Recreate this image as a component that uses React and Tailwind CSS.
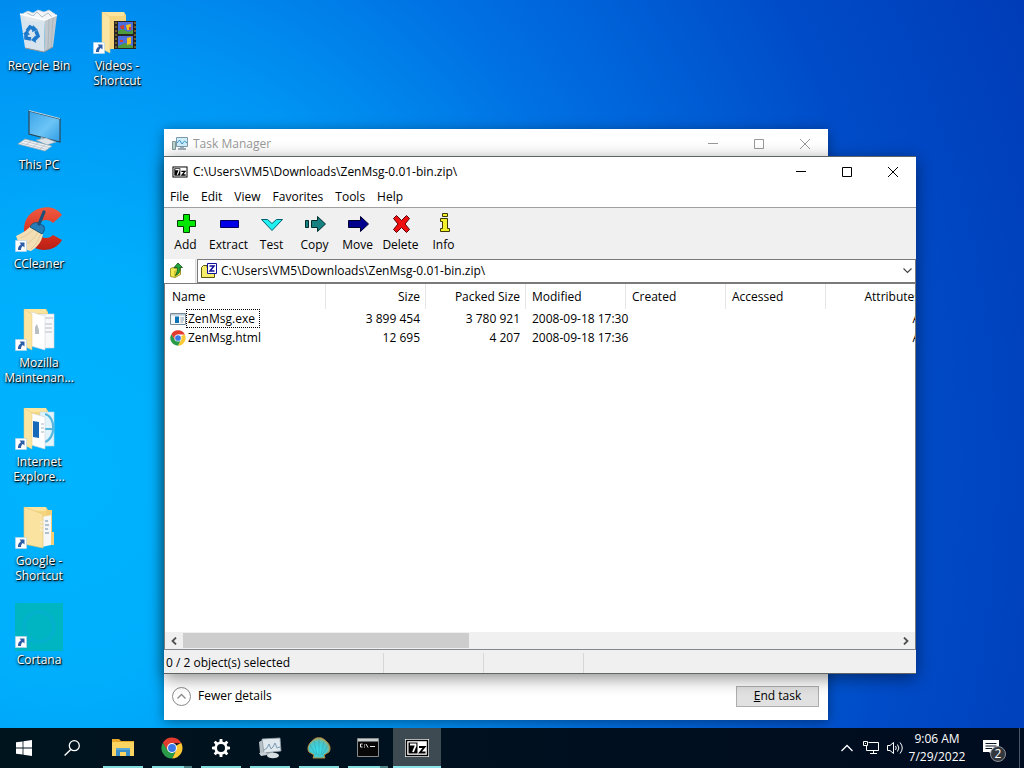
import React from "react";

const desktopColumns = [
  [
    { label: "Recycle Bin", Icon: RecycleBinIcon },
    { label: "This PC", Icon: ComputerIcon },
    { label: "CCleaner", Icon: CCleanerIcon, shortcut: true },
    { label: "Mozilla Maintenan...", Icon: MozillaFolderIcon, shortcut: true },
    { label: "Internet Explore...", Icon: ExplorerFolderIcon, shortcut: true },
    { label: "Google - Shortcut", Icon: GoogleFolderIcon, shortcut: true },
    { label: "Cortana", Icon: CortanaIcon, shortcut: true },
  ],
  [{ label: "Videos - Shortcut", Icon: VideosFolderIcon, shortcut: true }],
];

const menus = ["File", "Edit", "View", "Favorites", "Tools", "Help"];

const tools = [
  { label: "Add", Icon: AddIcon },
  { label: "Extract", Icon: ExtractIcon },
  { label: "Test", Icon: TestIcon },
  { label: "Copy", Icon: CopyIcon },
  { label: "Move", Icon: MoveIcon },
  { label: "Delete", Icon: DeleteIcon },
  { label: "Info", Icon: InfoIcon },
];

const files = [
  { name: "ZenMsg.exe", size: "3 899 454", packed: "3 780 921", modified: "2008-09-18 17:30", Icon: ExeIcon, focused: true },
  { name: "ZenMsg.html", size: "12 695", packed: "4 207", modified: "2008-09-18 17:36", Icon: ChromeIcon },
];

const apps = [
  { name: "File Explorer", Icon: FileExplorerIcon },
  { name: "Google Chrome", Icon: ChromeIcon, stacked: true },
  { name: "Settings", Icon: GearIcon },
  { name: "Task Manager", Icon: TaskManagerBigIcon },
  { name: "Classic Shell", Icon: ShellIcon },
  { name: "Command Prompt", Icon: TerminalIcon, stacked: true },
  { name: "7-Zip", Icon: SevenZipIcon, active: true },
];

/* ---------- desktop icons ---------- */

function RecycleBinIcon() {
  return (
    <svg viewBox="0 0 48 48" className="size-12">
      <path d="M7 5 13 2 18 4 23 1 29 3 34 1 40 5 42 7 36 12H12Z" fill="#f3f6f8" stroke="#c5ced6" strokeWidth=".7" />
      <path d="M12 4 18 7 22 3 27 8 33 4 37 8" fill="none" stroke="#aab7c2" strokeWidth=".9" />
      <path d="M5 5 30 11 29 43 10 39Z" fill="#e3e8ec" opacity=".95" />
      <path d="M30 11 42 6 38 38 29 43Z" fill="#c0c8ce" />
      <path d="M34 10 33 40M38 8 36 39" stroke="#aab3ba" strokeWidth=".8" />
      <path d="M5 5 30 11 42 6" fill="none" stroke="#fff" strokeWidth="1.3" />
      <path d="M10 39 29 43 38 38" fill="none" stroke="#8c959c" strokeWidth="1" />
      <g fill="none" stroke="#1b78cb" strokeWidth="3.6">
        <path d="M12 22 15 18 19 20" />
        <path d="M21 22 23 27 19 31" />
        <path d="M16 30 11 29 11 24" />
      </g>
      <path d="M18 16 23 21 17 23ZM20 27 16 31 21 34ZM8 25 12 21 15 26Z" fill="#1b78cb" />
    </svg>
  );
}

function ComputerIcon() {
  return (
    <svg viewBox="0 0 48 48" className="size-12">
      <defs>
        <linearGradient id="screen" x1="0" y1="0" x2="1" y2="1">
          <stop offset="0" stopColor="#3ba4e8" />
          <stop offset=".55" stopColor="#6cc4f6" />
          <stop offset="1" stopColor="#2f9be4" />
        </linearGradient>
      </defs>
      <path d="M14 3 45 11V34L14 26Z" fill="url(#screen)" stroke="#2d4658" strokeWidth="1.2" />
      <path d="M14 2.500 45 10.500" stroke="#dff0fa" strokeWidth=".8" />
      <path d="M26 29 33 31 32 33 25 32Z" fill="#b9c4cc" />
      <path d="M21 32 31 30 41 34 32 37Z" fill="#dde3e8" stroke="#93a3ae" strokeWidth=".6" />
      <path d="M3 36 10 31 37 38 30 43Z" fill="#eef1f4" stroke="#9aa7b0" strokeWidth=".7" />
      <path d="M6 35 32 41.500M9 33 34 39.500M11 37 16 33M18 39 23 35M25 41 30 37" stroke="#b2bcc4" strokeWidth=".7" />
    </svg>
  );
}

function CCleanerIcon() {
  return (
    <svg viewBox="0 0 48 48" className="size-12">
      <defs>
        <linearGradient id="cc" x1="0" y1="0" x2="0" y2="1">
          <stop offset="0" stopColor="#ef5b42" />
          <stop offset=".6" stopColor="#d8321f" />
          <stop offset="1" stopColor="#b91f14" />
        </linearGradient>
      </defs>
      <path d="M47 8C42 1 34-1 26 1 15 4 9 12 9 23S16 42 28 43c8 0 15-3 19-10L38 28c-2 2-4 3-7 3-5 0-9-4-9-9s4-9 9-9c3 0 5 1 7 3Z" fill="url(#cc)" />
      <path d="M1 29C8 26 13 22 17 18L28 25C28 33 23 40 16 44 9 43 4 38 1 29Z" fill="#f3dfb6" />
      <path d="M5 31C11 29 15 26 19 22M10 38C17 34 20 30 23 25M16 42C21 38 23 33 26 27" fill="none" stroke="#dcc08e" strokeWidth=".7" />
      <path d="M15 20C17 16 20 15 23 16L29 19C30 22 29 25 27 27Z" fill="#257eb8" stroke="#15567f" />
      <path d="M24 17 29 5" stroke="#1b4f79" strokeWidth="3.200" strokeLinecap="round" />
    </svg>
  );
}

function FolderBack() {
  return (
    <>
      <path d="M9 3H31L33 6V40H9Z" fill="#f5d67f" />
      <path d="M9 3H31V7H9Z" fill="#fbe49e" />
    </>
  );
}

function FolderFlap() {
  return <path d="M9 3 17 8V44L9 40Z" fill="#fbe5a2" stroke="#e8c874" strokeWidth=".5" />;
}

function MozillaFolderIcon() {
  return (
    <svg viewBox="0 0 48 48" className="size-12">
      <FolderBack />
      <path d="M25 8H39V42H25Z" fill="#f7f8fa" stroke="#d3d9df" strokeWidth=".6" />
      <path d="M29 12H38M30 18H37M30 22H37M30 26H37" stroke="#b7bdc6" strokeWidth="1" />
      <path d="M16 6 30 10V44L16 40Z" fill="#fff" stroke="#d3d9df" strokeWidth=".6" />
      <path d="M20 21 22 18 24 24V28H20Z" fill="#b9bec4" />
      <FolderFlap />
    </svg>
  );
}

function ExplorerFolderIcon() {
  return (
    <svg viewBox="0 0 48 48" className="size-12">
      <FolderBack />
      <path d="M25 7H39V41H25Z" fill="#e2f4fb" stroke="#b7d8e8" strokeWidth=".6" />
      <path d="M30 9C41 12 41 33 30 37M30 24H39" fill="none" stroke="#55b7df" strokeWidth="2.200" />
      <path d="M16 8 30 12V44L16 40Z" fill="#fff" stroke="#cdd5dc" strokeWidth=".6" />
      <path d="M18 16 24 17V33L18 32Z" fill="#1668b8" />
      <path d="M26 19H29M26 23H29M26 27H29" stroke="#a6b5c2" />
      <FolderFlap />
    </svg>
  );
}

function GoogleFolderIcon() {
  return (
    <svg viewBox="0 0 48 48" className="size-12">
      <FolderBack />
      <path d="M31 6H37V28H39V41H31Z" fill="#f2cf76" />
      <path d="M27 13 36 11V41L27 43Z" fill="#f4f6f8" />
      <path d="M30 17H33M30 21H34M30 25H33M30 29H34" stroke="#6a8aa6" strokeWidth="1.200" />
      <path d="M9 3 28 10V44L9 40Z" fill="#fae2a0" stroke="#e6c573" strokeWidth=".6" />
      <path d="M25 18H28M25 22H28M25 26H28" stroke="#f4ead0" strokeWidth="1.500" />
    </svg>
  );
}

function CortanaIcon() {
  return (
    <svg viewBox="0 0 48 48" className="size-12">
      <path d="M0 0H48V48H0Z" fill="#00b5c2" />
      <circle cx="24" cy="24" r="15" fill="none" stroke="#04b1cc" strokeWidth="4" />
    </svg>
  );
}

function VideosFolderIcon() {
  return (
    <svg viewBox="0 0 48 48" className="size-12">
      <FolderBack />
      <FolderFlap />
      <path d="M21 12H43V40H21Z" fill="#242424" />
      <path d="M25 13H40V25H25ZM25 27H40V39H25Z" fill="#4b6dde" />
      <path d="M25 22 30 20 35 23 40 21V25H25ZM25 37 32 34 40 37V39H25Z" fill="#4e9a3c" />
      <path d="M33 16 38 15 37 21H34ZM34 29 38 28V35L34 36Z" fill="#f1c01d" />
      <path d="M27 17 31 16V20H28ZM36 18H38V21H36ZM27 31H30V33H27Z" fill="#d0402c" />
      <path d="M23 13V39M42 13V39" stroke="#a58436" strokeWidth="1.200" strokeDasharray="2 2" />
    </svg>
  );
}

function ShortcutBadge() {
  return (
    <svg viewBox="0 0 12 12" className="absolute bottom-[3px] left-0 size-3">
      <path d="M.5.5H11.500V11.500H.5Z" fill="#fff" stroke="#b9d5e8" strokeWidth=".7" />
      <path d="M4.500 2.500H9.500V7.500L7.800 6C6.500 7 6 8.200 6 10H3C2.800 7.400 3.800 5.600 6 4.200Z" fill="#2c5ea8" />
    </svg>
  );
}

/* ---------- file manager icons ---------- */

function SevenZipIcon({ className = "h-3 w-4" }) {
  return (
    <svg viewBox="0 0 24 18" className={className}>
      <path d="M0 0H24V18H0Z" fill="#fff" />
      <path d="M.7 .7H23.300V17.300H.7Z" fill="#000" />
      <path d="M2.200 2.200H21.800V15.800H2.200Z" fill="#fff" />
      <path d="M3.500 3.500H12.500V14.500H3.500Z" fill="#000" />
      <path d="M5 5.500H10.500V7L8 13" fill="none" stroke="#fff" strokeWidth="1.800" />
      <path d="M14 8H19.500L15 13.500H20.500" fill="none" stroke="#000" strokeWidth="1.900" />
    </svg>
  );
}

function AddIcon() {
  return (
    <svg viewBox="0 0 24 24" className="size-6">
      <path d="M9.500 2.500H15.500V8.500H21.500V14.500H15.500V20.500H9.500V14.500H3.500V8.500H9.500Z" fill="#00e800" stroke="#003c00" />
    </svg>
  );
}

function ExtractIcon() {
  return (
    <svg viewBox="0 0 24 24" className="size-6">
      <path d="M3.500 8.500H21.500V15.500H3.500Z" fill="#0000e8" stroke="#00005a" />
    </svg>
  );
}

function TestIcon() {
  return (
    <svg viewBox="0 0 24 24" className="size-6">
      <path d="M1.500 7.500H7.500L12 11.500 16.500 7.500H22.500L12 18.500Z" fill="#20f0f0" stroke="#006070" />
    </svg>
  );
}

function CopyIcon() {
  return (
    <svg viewBox="0 0 24 24" className="size-6">
      <path d="M2.500 8.500H5.500V15.500H2.500ZM8.500 8.500H14.500V4.500L22.500 12 14.500 19.500V15.500H8.500Z" fill="#178080" stroke="#002c2c" />
    </svg>
  );
}

function MoveIcon() {
  return (
    <svg viewBox="0 0 24 24" className="size-6">
      <path d="M2.500 8.500H14.500V4.500L22.500 12 14.500 19.500V15.500H2.500Z" fill="#00008c" stroke="#000030" />
    </svg>
  );
}

function DeleteIcon() {
  return (
    <svg viewBox="0 0 24 24" className="size-6">
      <path d="M4.500 6.500 7.500 3.500 12.500 8.500 17.500 3.500 20.500 6.500 16 12 20.500 17.500 17.500 20.500 12.500 15.500 7.500 20.500 4.500 17.500 9 12Z" fill="#f01010" stroke="#5a0000" />
    </svg>
  );
}

function InfoIcon() {
  return (
    <svg viewBox="0 0 24 24" className="size-6">
      <path d="M10.500 1.500H15.500V4.500H10.500ZM8.500 6.500H15.500V16.500H17.500V19.500H8.500V16.500H10.500V9.500H8.500Z" fill="#f4f02c" stroke="#3c3a00" />
    </svg>
  );
}

function FolderUpIcon() {
  return (
    <svg viewBox="0 0 16 16" className="size-4">
      <path d="M2.500 5.500 5 4.500 7 5.500 12.500 4.500V11.500L7 14.500 2.500 13.500Z" fill="#f4ea50" stroke="#8c8410" strokeWidth=".8" />
      <path d="M7 7.500V14.500" stroke="#a8a018" />
      <path d="M10 0 14.500 4.500H12C12.500 8.500 11 11 7.500 12.500 9 10 9.500 7.500 9.300 4.500H6Z" fill="#22a83a" stroke="#0c4c18" strokeWidth=".8" />
    </svg>
  );
}

function ArchiveIcon() {
  return (
    <svg viewBox="0 0 16 16" className="size-4 shrink-0">
      <path d="M.5 4.500 2.500 2.500H6V4.500H13.500V14.500H.5Z" fill="#f6ee6a" stroke="#5c5808" />
      <path d="M6.500.5H15.500V10.500H6.500Z" fill="#fff" stroke="#10109a" />
      <path d="M8.500 3H13L9 8H13.500" fill="none" stroke="#10109a" strokeWidth="1.500" />
    </svg>
  );
}

function ExeIcon() {
  return (
    <svg viewBox="0 0 16 16" className="size-4">
      <path d="M.5 2.500H15.500V13.500H.5Z" fill="#f5f8fa" stroke="#7a8b98" />
      <path d="M1 3H15V4.500H1Z" fill="#b8c9d6" />
      <path d="M5 5.500H9V12H5Z" fill="#0d74b8" />
      <path d="M10.500 7H14M10.500 9H14M10.500 11H13" stroke="#93a3ae" />
    </svg>
  );
}

function ChromeIcon({ className = "size-4" }) {
  return (
    <svg viewBox="0 0 24 24" className={className}>
      <path d="M12 12 22 6.300A11.500 11.500 0 0 1 12 23.500L16.500 14.500Z" fill="#fcc934" />
      <path d="M12 12 16.400 14.600 12 23.500A11.500 11.500 0 0 1 2.040 6.250L7.700 14.500Z" fill="#2a9b49" />
      <path d="M12 6.700H22.200A11.500 11.500 0 0 0 2.040 6.250L7.400 14.600Z" fill="#e33b2e" />
      <circle cx="12" cy="12" r="5.400" fill="#fff" />
      <circle cx="12" cy="12" r="4.300" fill="#3b78e7" />
    </svg>
  );
}

function MonitorIcon() {
  return (
    <svg viewBox="0 0 16 16" className="size-4">
      <path d="M.5 5.500H3.500V13.500H.5Z" fill="#bcd3d0" stroke="#7f9a98" />
      <path d="M4.500 1.500H15.500V10.500H4.500Z" fill="#cfeefb" stroke="#7d99ab" />
      <path d="M5 7 7.500 4 10 8 12.500 5 15 7" fill="none" stroke="#3c93c8" />
      <path d="M8 11H12V12H14V14H6V12H8Z" fill="#9fb0bb" />
    </svg>
  );
}

/* ---------- taskbar icons ---------- */

function WindowsLogo() {
  return (
    <svg viewBox="0 0 16 16" className="size-4">
      <path d="M0 2.300 6.600 1.400V7.600H0ZM7.400 1.300 16 0V7.600H7.400ZM0 8.400H6.600V14.600L0 13.700ZM7.400 8.400H16V16L7.400 14.700Z" fill="#fff" />
    </svg>
  );
}

function SearchIcon() {
  return (
    <svg viewBox="0 0 16 16" className="size-4">
      <circle cx="10.300" cy="5.700" r="5" fill="none" stroke="#fff" strokeWidth="1.300" />
      <path d="M6.800 9.500.6 15.500" stroke="#fff" strokeWidth="1.400" />
    </svg>
  );
}

function FileExplorerIcon() {
  return (
    <svg viewBox="0 0 24 20" className="h-5 w-6">
      <path d="M1 1H8L10 3H23V18H1Z" fill="#e8a82c" />
      <path d="M1 4H23V18H1Z" fill="#fcd462" />
      <path d="M5 10H19V18H15V14H9V18H5Z" fill="#3a8fc8" />
      <path d="M5 10H19V12H5Z" fill="#5aa8d6" />
    </svg>
  );
}

function GearIcon() {
  const teeth = [0, 45, 90, 135, 180, 225, 270, 315];
  return (
    <svg viewBox="0 0 20 20" className="size-5">
      {teeth.map((angle) => (
        <path key={angle} d="M8.300 4.500 8.700 1H11.300L11.700 4.500Z" fill="#fff" transform={`rotate(${angle} 10 10)`} />
      ))}
      <circle cx="10" cy="10" r="5.300" fill="none" stroke="#fff" strokeWidth="2.600" />
    </svg>
  );
}

function TaskManagerBigIcon() {
  return (
    <svg viewBox="0 0 24 24" className="size-6">
      <path d="M1 6 6 3V18L2 17Z" fill="#b4bec4" />
      <path d="M4 3 22 2 23 15 6 17Z" fill="#dfe8ed" stroke="#8e9ba3" strokeWidth=".8" />
      <path d="M6 14 9 12 11 8 13 13 15 11 17 7 19 12 22 11" fill="none" stroke="#6d93b0" strokeWidth=".9" />
      <path d="M7 17 15 16 16 19H9Z" fill="#9ca8ae" />
      <ellipse cx="15" cy="19.500" rx="6" ry="2.800" fill="#d7dee2" />
      <path d="M1 17 8 16 9 19 3 20Z" fill="#c8d0d5" />
    </svg>
  );
}

function ShellIcon() {
  return (
    <svg viewBox="0 0 24 24" className="size-6">
      <defs>
        <radialGradient id="shell" cx=".45" cy=".6" r=".65">
          <stop offset="0" stopColor="#35e2f0" />
          <stop offset=".6" stopColor="#45c6cc" />
          <stop offset="1" stopColor="#c7a348" />
        </radialGradient>
      </defs>
      <path d="M12 2C15 1 18 4 20 6 23 9 24 13 22 16L17 19 18 22H6L7 19 2 16C0 13 1 9 4 6 6 4 9 1 12 2Z" fill="url(#shell)" stroke="#b38b3c" />
      <path d="M12 20V3M10 19 7 5M14 19 17 5M9 19 3 9M15 19 21 9" stroke="#3aa5ae" strokeWidth=".6" />
    </svg>
  );
}

function TerminalIcon() {
  return (
    <svg viewBox="0 0 24 20" className="h-5 w-6">
      <path d="M1.500 .5H22.500V18.500H1.500Z" fill="#080808" stroke="#8b8b8b" />
      <path d="M2 1H22V3.500H2Z" fill="#c9d0d2" />
      <path d="M6.500 6H4.500V9H6.500M8.500 6.500V7.500M8.500 8.500V9.500M10 6 12 9.500M14 8.500H19" fill="none" stroke="#e8e8e8" strokeWidth="1" />
    </svg>
  );
}

/* ---------- windows ---------- */

function WindowControls({ muted }) {
  const tone = muted ? "text-[#999999]" : "text-black";
  const shapes = [
    { name: "Minimize", d: "M0 4.500H10" },
    { name: "Maximize", d: "M.5.5H9.500V9.500H.5Z" },
    { name: "Close", d: "M0 0 10 10M10 0 0 10" },
  ];
  return (
    <div className={`flex h-full ${tone}`}>
      {shapes.map((s) => (
        <button key={s.name} type="button" aria-label={s.name} className="flex h-full w-[46px] items-center justify-center">
          <svg viewBox="0 0 10 10" className="size-[10px] overflow-visible" fill="none" stroke="currentColor">
            <path d={s.d} />
          </svg>
        </button>
      ))}
    </div>
  );
}

function TaskManager() {
  return (
    <section className="absolute left-[164px] top-[129px] flex h-[591px] w-[664px] flex-col justify-between bg-white shadow-[0_2px_12px_rgba(0,0,0,0.4)]">
      <header className="flex h-[29px] items-center justify-between pl-2">
        <div className="flex items-center gap-[5px] text-[#999999]">
          <MonitorIcon />
          <h2>Task Manager</h2>
        </div>
        <WindowControls muted />
      </header>
      <footer className="flex h-12 items-center justify-between pl-2 pr-[9px]">
        <button type="button" className="flex items-center gap-[7px]">
          <svg viewBox="0 0 19 19" className="size-[19px]" fill="none" stroke="#8a8a8a">
            <circle cx="9.500" cy="9.500" r="9" />
            <path d="M5.500 11.500 9.500 7.500 13.500 11.500" strokeWidth="1.300" />
          </svg>
          <span>
            Fewer <u>d</u>etails
          </span>
        </button>
        <button type="button" className="h-[21px] w-[83px] border border-[#adadad] bg-[#e1e1e1] leading-none">
          <u>E</u>nd task
        </button>
      </footer>
    </section>
  );
}

function FileTable() {
  const head = "h-[25px] border-r border-[#e5e5e5] pr-[5px] font-normal";
  return (
    <div className="min-h-0 flex-1 overflow-hidden border-x border-t border-[#7a7a7a] bg-white">
      <table className="w-[761px] table-fixed border-separate border-spacing-0 whitespace-nowrap">
        <colgroup>
          <col className="w-[161px]" />
          <col className="w-[100px]" />
          <col className="w-[100px]" />
          <col className="w-[100px]" />
          <col className="w-[100px]" />
          <col className="w-[100px]" />
          <col className="w-[100px]" />
        </colgroup>
        <thead>
          <tr>
            <th className={`${head} pl-[7px] text-left`}>Name</th>
            <th className={`${head} text-right`}>Size</th>
            <th className={`${head} text-right`}>Packed Size</th>
            <th className={`${head} pl-[6px] text-left`}>Modified</th>
            <th className={`${head} pl-[6px] text-left`}>Created</th>
            <th className={`${head} pl-[6px] text-left`}>Accessed</th>
            <th className={`${head} text-right`}>Attributes</th>
          </tr>
        </thead>
        <tbody>
          {files.map((f) => (
            <tr key={f.name} className="h-[19px]">
              <td className="pl-[5px]">
                <div className="flex items-center">
                  <f.Icon />
                  <span className={`border border-dotted px-px leading-[17px] ${f.focused ? "border-black pr-1" : "border-transparent"}`}>
                    {f.name}
                  </span>
                </div>
              </td>
              <td className="px-[6px] text-right">{f.size}</td>
              <td className="px-[6px] text-right">{f.packed}</td>
              <td className="pl-[6px]">{f.modified}</td>
              <td />
              <td />
              <td className="px-[6px] text-right">A</td>
            </tr>
          ))}
        </tbody>
      </table>
    </div>
  );
}

function ScrollBar() {
  return (
    <div className="flex h-[17px] items-center border-x border-[#7a7a7a] bg-[#f0f0f0]">
      <button type="button" aria-label="Scroll left" className="flex w-[18px] justify-center">
        <svg viewBox="0 0 6 8" className="h-2 w-[6px]" fill="none" stroke="#505050" strokeWidth="1.800">
          <path d="M5 .5 1.500 4 5 7.500" />
        </svg>
      </button>
      <div className="flex h-[15px] flex-1">
        <div className="w-2/5 bg-[#cdcdcd]" />
      </div>
      <button type="button" aria-label="Scroll right" className="flex w-[18px] justify-center">
        <svg viewBox="0 0 6 8" className="h-2 w-[6px]" fill="none" stroke="#505050" strokeWidth="1.800">
          <path d="M1 .5 4.500 4 1 7.500" />
        </svg>
      </button>
    </div>
  );
}

function FileManager() {
  return (
    <section className="absolute left-[164px] top-[156px] flex h-[518px] w-[752px] flex-col border-y border-[#5f6467] bg-white shadow-[0_4px_16px_rgba(0,0,0,0.45)]">
      <header className="flex h-[30px] items-center justify-between pl-2">
        <div className="flex items-center gap-[5px]">
          <SevenZipIcon />
          <h1>C:\Users\VM5\Downloads\ZenMsg-0.01-bin.zip\</h1>
        </div>
        <WindowControls />
      </header>

      <nav className="flex h-5 items-center">
        {menus.map((m) => (
          <button key={m} type="button" className="px-[6px]">
            {m}
          </button>
        ))}
      </nav>

      <div className="flex h-[52px] border-t border-[#a0a0a0] bg-[#f0f0f0]">
        {tools.map(({ label, Icon }) => (
          <button key={label} type="button" className="flex w-[43px] flex-col items-center pt-1">
            <Icon />
            <span className="leading-[18px]">{label}</span>
          </button>
        ))}
      </div>

      <div className="flex h-6 gap-px bg-[#f0f0f0]">
        <button type="button" aria-label="Up one level" className="flex w-8 items-center border-r border-[#dcdcdc] bg-white pl-1">
          <FolderUpIcon />
        </button>
        <div className="flex flex-1 items-center gap-1 border border-[#7a7a7a] bg-white pl-[3px]">
          <ArchiveIcon />
          <input
            type="text"
            aria-label="Path"
            defaultValue="C:\Users\VM5\Downloads\ZenMsg-0.01-bin.zip\"
            className="min-w-0 flex-1 bg-transparent outline-none"
          />
          <button type="button" aria-label="Show paths" className="flex w-4 justify-center">
            <svg viewBox="0 0 9 6" className="h-[6px] w-[9px]" fill="none" stroke="#444" strokeWidth="1.100">
              <path d="M.5.5 4.500 4.500 8.500.5" />
            </svg>
          </button>
        </div>
      </div>

      <FileTable />
      <ScrollBar />

      <footer className="flex h-6 items-center border-t border-[#828790] bg-[#f0f0f0] pt-[3px]">
        <span className="w-[219px] pl-[2px]">0 / 2 object(s) selected</span>
        <span className="h-full w-[100px] border-l border-[#d7d7d7]" />
        <span className="h-full w-[100px] border-l border-[#d7d7d7]" />
        <span className="h-full flex-1 border-l border-[#d7d7d7]" />
      </footer>
    </section>
  );
}

/* ---------- desktop and taskbar ---------- */

function DesktopIcon({ label, Icon, shortcut }) {
  return (
    <a href="#" className="flex h-[99px] w-[78px] flex-col items-center gap-px pt-[9px]">
      <span className="relative">
        <Icon />
        {shortcut && <ShortcutBadge />}
      </span>
      <span className="px-1 text-center leading-[15px] text-white [text-shadow:1px_1px_1px_#000,0_1px_3px_rgba(0,0,0,0.9)]">{label}</span>
    </a>
  );
}

function AppButton({ name, Icon, active, stacked }) {
  const big = name === "Google Chrome" ? "size-[22px]" : name === "7-Zip" ? "h-[18px] w-6" : undefined;
  return (
    <button
      type="button"
      aria-label={name}
      className={`flex w-12 flex-col items-center ${active ? "bg-[#3d4a52]" : "px-1"}`}
    >
      <span className="flex flex-1 items-center pt-[2px]">
        <Icon className={big} />
      </span>
      <span className={`flex h-[2px] w-full justify-end ${active ? "bg-[#8ae4ea]" : "bg-[#84dcdc]"}`}>
        {stacked && <span className="w-2 bg-[#4d8488]" />}
      </span>
    </button>
  );
}

function Taskbar() {
  return (
    <footer className="flex h-10 shrink-0 justify-between bg-linear-to-r from-[#00141e] to-[#000c20] text-white">
      <div className="flex">
        <button type="button" aria-label="Start" className="flex w-12 items-center justify-center">
          <WindowsLogo />
        </button>
        <button type="button" aria-label="Search" className="flex w-12 items-center justify-center">
          <SearchIcon />
        </button>
        <div className="flex gap-px pl-[3px]">
          {apps.map((app) => (
            <AppButton key={app.name} {...app} />
          ))}
        </div>
      </div>

      <div className="flex items-center">
        <button type="button" aria-label="Show hidden icons" className="flex w-6 justify-center">
          <svg viewBox="0 0 12 8" className="h-2 w-3" fill="none" stroke="#fff" strokeWidth="1.300">
            <path d="M.5 7 6 1.500 11.500 7" />
          </svg>
        </button>
        <button type="button" aria-label="Network" className="flex w-6 justify-center">
          <svg viewBox="0 0 16 16" className="size-4" fill="none" stroke="#fff">
            <path d="M5.500 2.500H15.500V10.500H3.500V6M10.500 10.500V13.500M7 13.500H14M.5 1.500H4.500V5.500H.5ZM2 3.500H3" />
          </svg>
        </button>
        <button type="button" aria-label="Volume" className="flex w-6 justify-center">
          <svg viewBox="0 0 17 16" className="h-4 w-[17px]" fill="none" stroke="#fff">
            <path d="M.5 5.500H3L6.500 2.500V13.500L3 10.500H.5ZM8.500 6Q10 8 8.500 10M10.500 4.500Q13.200 8 10.500 11.500M13 2.500Q17.500 8 13 13.500" />
          </svg>
        </button>
        <button type="button" className="w-[60px] text-center leading-[18px]">
          <time dateTime="2022-07-29T09:06">
            9:06 AM
            <br />
            7/29/2022
          </time>
        </button>
        <button type="button" aria-label="Notifications" className="relative flex w-12 justify-center">
          <svg viewBox="0 0 16 16" className="size-4">
            <path d="M0 0H16V12H10V16L6 12H0Z" fill="#fff" />
            <path d="M2.500 3.500H13.500M2.500 6H13.500M2.500 8.500H9" stroke="#0a1626" />
          </svg>
          <span className="absolute left-[23px] top-[6px] flex size-4 items-center justify-center rounded-full border border-[#8a8f96] bg-[#33383f] leading-none">
            2
          </span>
        </button>
        <button type="button" aria-label="Show desktop" className="ml-1 h-10 w-[5px] border-l border-[#4a5566]" />
      </div>
    </footer>
  );
}

export default function App() {
  return (
    <div className="flex h-screen w-full flex-col overflow-hidden bg-[#0050d0] font-['Open_Sans','Noto_Sans',sans-serif] text-[12px] leading-4 text-black">
      <main className="relative min-h-0 flex-1 overflow-hidden bg-[radial-gradient(ellipse_105%_160%_at_6%_65%,#00b4ff_0%,#00aefc_18%,#0096f4_36%,#0070e2_54%,#004cc8_78%,#003ab6_100%)]">
        <div className="flex">
          {desktopColumns.map((column, i) => (
            <div key={i} className="flex flex-col">
              {column.map((item) => (
                <DesktopIcon key={item.label} {...item} />
              ))}
            </div>
          ))}
        </div>
        <TaskManager />
        <FileManager />
      </main>
      <Taskbar />
    </div>
  );
}
